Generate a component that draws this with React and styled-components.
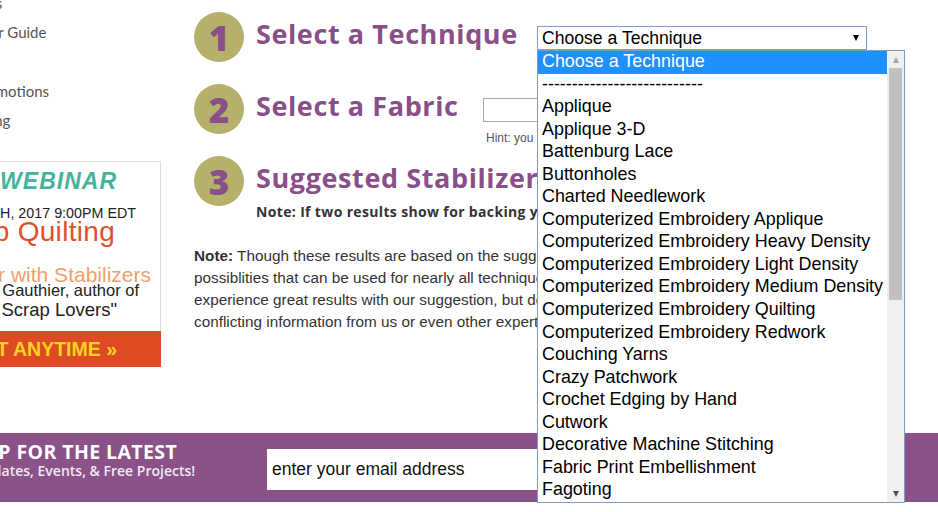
import React from "react";
import styled, { createGlobalStyle } from "styled-components";

const PURPLE = "#8a4f88";
const OLIVE = "#b5b06a";
const BAR = "#8b5189";

const GlobalStyle = createGlobalStyle`
  html, body { margin: 0; padding: 0; background: #ffffff; }
  body { overflow: hidden; font-family: "Liberation Sans", Arial, sans-serif; color: #333; }
  * { box-sizing: border-box; }
`;

const Page = styled.div`
  width: 938px;
  height: 512px;
  overflow: hidden;
  display: flex;
  flex-direction: column;
  background: #fff;
`;

const Band = styled.div`
  display: flex;
  justify-content: center;
  flex-shrink: 0;
  background: ${(p) => p.$bg || "transparent"};
  height: ${(p) => (p.$h ? `${p.$h}px` : "auto")};
`;

const Layout = styled.div`
  width: 1052px;
  flex-shrink: 0;
  display: grid;
  grid-template-columns: 218px 1fr;
  align-items: start;
`;

/* ---------- sidebar ---------- */
const Sidebar = styled.aside`
  display: flex;
  flex-direction: column;
  padding-bottom: 66px;
`;

const NavList = styled.ul`
  list-style: none;
  margin: -11px 0 0;
  padding: 0 0 0 1px;
`;

const NavItem = styled.li`
  font-family: Lato, "Open Sans", sans-serif;
  font-size: 15px;
  line-height: 29.25px;
  color: #555;
  white-space: nowrap;
`;

const Banner = styled.div`
  margin-top: 26px;
  height: 206px;
  display: flex;
  flex-direction: column;
  border-top: 1px solid #dcdcdc;
  background: #fff;
  overflow: hidden;
`;

const BannerBody = styled.div`
  flex: 1;
  border-right: 1px solid #dcdcdc;
  display: flex;
  flex-direction: column;
`;

const AdLine = styled.div`
  display: flex;
  justify-content: flex-end;
  white-space: nowrap;
  padding-right: ${(p) => p.$inset}px;
  margin-top: ${(p) => p.$top}px;
  font-family: "Liberation Sans", Arial, sans-serif;
  font-size: ${(p) => p.$size}px;
  line-height: 1;
  letter-spacing: ${(p) => p.$ls || 0}px;
  font-weight: ${(p) => (p.$bold ? 700 : 400)};
  font-style: ${(p) => (p.$italic ? "italic" : "normal")};
  color: ${(p) => p.$color};
`;

const AdCta = styled.div`
  height: 36px;
  flex-shrink: 0;
  background: #de4a24;
  color: #f8d31f;
  display: flex;
  align-items: center;
  justify-content: flex-end;
  padding-right: 44px;
  white-space: nowrap;
  font-family: "Liberation Sans", Arial, sans-serif;
  font-weight: 700;
  font-size: 19.5px;
`;

/* ---------- main ---------- */
const Main = styled.main`
  padding: 12px 0 0 33px;
  display: flex;
  flex-direction: column;
`;

const Step = styled.div`
  display: flex;
  align-items: flex-start;
  height: ${(p) => (p.$h ? `${p.$h}px` : "auto")};
  margin-bottom: ${(p) => p.$mb}px;
`;

const Badge = styled.div`
  width: 50px;
  height: 50px;
  flex-shrink: 0;
  border-radius: 50%;
  background: ${OLIVE};
  color: ${PURPLE};
  display: flex;
  align-items: center;
  justify-content: center;
  font-family: "Open Sans", sans-serif;
  font-weight: 800;
  font-size: 35px;
  line-height: 1;
`;

const StepBody = styled.div`
  display: flex;
  flex-direction: column;
  margin-left: 12px;
`;

const StepHead = styled.div`
  display: flex;
  align-items: flex-start;
`;

const Title = styled.h2`
  margin: 0;
  flex-shrink: 0;
  width: ${(p) => (p.$w ? `${p.$w}px` : "auto")};
  padding-bottom: 6px;
  font-family: "Open Sans", sans-serif;
  font-weight: 700;
  font-size: 27px;
  line-height: 44px;
  letter-spacing: 0.6px;
  color: ${PURPLE};
  white-space: nowrap;
`;

const Field = styled.div`
  position: relative;
  margin-top: 14px;
  display: flex;
  flex-direction: column;
`;

const SelectBox = styled.div`
  width: 330px;
  height: 24px;
  border: 1px solid #7b9dd3;
  background: #fff;
  display: flex;
  align-items: center;
  justify-content: space-between;
  padding: 0 7px 0 4px;
  font-size: 17.6px;
  color: #000;
  white-space: nowrap;
`;

const Caret = styled.span`
  width: 0;
  height: 0;
  border-left: 3.5px solid transparent;
  border-right: 3.5px solid transparent;
  border-top: 6px solid ${(p) => p.$color || "#000"};
  ${(p) => p.$up && "transform: rotate(180deg);"}
`;

const Dropdown = styled.div`
  position: absolute;
  top: 100%;
  left: 0;
  width: 368px;
  height: 453px;
  border: 1px solid #7f9db9;
  background: #fff;
  display: flex;
  z-index: 20;
`;

const OptionList = styled.ul`
  flex: 1;
  list-style: none;
  margin: 0;
  padding: 0;
  overflow: hidden;
`;

const Option = styled.li`
  height: 22.55px;
  line-height: 21.5px;
  padding-left: 4px;
  font-size: 17.9px;
  white-space: nowrap;
  color: ${(p) => (p.$active ? "#fff" : "#000")};
  background: ${(p) => (p.$active ? "#1e90ff" : "transparent")};
`;

const Scrollbar = styled.div`
  width: 17px;
  flex-shrink: 0;
  background: #f0f0f0;
  display: flex;
  flex-direction: column;
`;

const ScrollButton = styled.div`
  height: 17px;
  flex-shrink: 0;
  display: flex;
  align-items: center;
  justify-content: center;
`;

const Thumb = styled.div`
  height: 232px;
  margin: 0 2px;
  background: #c1c1c1;
`;

const Track = styled.div`
  flex: 1;
`;

const TextInput = styled.div`
  width: 300px;
  height: 24px;
  border: 1px solid #a9a9a9;
  background: #fff;
`;

const Hint = styled.div`
  margin-top: 9px;
  padding-left: 3px;
  font-size: 12px;
  line-height: 14px;
  color: #555;
  white-space: nowrap;
`;

const Note = styled.div`
  margin-top: -3px;
  font-family: "Open Sans", sans-serif;
  font-weight: 700;
  font-size: 14px;
  line-height: 18px;
  letter-spacing: 0.35px;
  color: #333;
  white-space: nowrap;
`;

const Paragraph = styled.p`
  margin: 24px 0 0;
  font-size: 15.3px;
  line-height: 22px;
  color: #333;
  white-space: nowrap;
`;

/* ---------- footer ---------- */
const FooterRow = styled.div`
  width: 1080px;
  flex-shrink: 0;
  display: flex;
  align-items: center;
  padding-top: 4px;
`;

const SignupText = styled.div`
  width: 338px;
  flex-shrink: 0;
  align-self: flex-start;
  margin-top: 5px;
  display: flex;
  flex-direction: column;
  color: #fff;
  font-family: "Open Sans", sans-serif;
  white-space: nowrap;
`;

const SignupTitle = styled.div`
  font-weight: 700;
  font-size: 19.5px;
  line-height: 20px;
  letter-spacing: 0.4px;
`;

const SignupSub = styled.div`
  font-weight: 600;
  font-size: 14px;
  line-height: 18px;
  color: #f2eaf1;
`;

const EmailInput = styled.div`
  width: 420px;
  height: 41px;
  background: #fff;
  display: flex;
  align-items: center;
  padding-left: 5px;
  font-size: 17.5px;
  color: #111;
`;

const OPTIONS = [
  "Choose a Technique",
  "---------------------------",
  "Applique",
  "Applique 3-D",
  "Battenburg Lace",
  "Buttonholes",
  "Charted Needlework",
  "Computerized Embroidery Applique",
  "Computerized Embroidery Heavy Density",
  "Computerized Embroidery Light Density",
  "Computerized Embroidery Medium Density",
  "Computerized Embroidery Quilting",
  "Computerized Embroidery Redwork",
  "Couching Yarns",
  "Crazy Patchwork",
  "Crochet Edging by Hand",
  "Cutwork",
  "Decorative Machine Stitching",
  "Fabric Print Embellishment",
  "Fagoting",
];

const NAV = ["Products", "Stabilizer Guide", "Blog", "Our Promotions", "Stabilizing"];

export default function App() {
  return (
    <Page>
      <GlobalStyle />
      <Band>
        <Layout>
          <Sidebar>
            <NavList>
              {NAV.map((n) => (
                <NavItem key={n}>{n}</NavItem>
              ))}
            </NavList>
            <Banner>
              <BannerBody>
                <AdLine $inset={43} $top={7.7} $size={23} $ls={1} $bold $italic $color="#45b39c">
                  FREE WEBINAR
                </AdLine>
                <AdLine $inset={24} $top={12.6} $size={14.3} $color="#222">
                  MARCH 28TH, 2017 9:00PM EDT
                </AdLine>
                <AdLine $inset={45} $top={-2.2} $size={28} $ls={0.3} $color="#e0502a">
                  Scrap Quilting
                </AdLine>
                <AdLine $inset={9} $top={18.5} $size={21} $color="#f1a06c">
                  Better with Stabilizers
                </AdLine>
                <AdLine $inset={21} $top={-2.8} $size={16.5} $color="#222">
                  with Kathy Gauthier, author of
                </AdLine>
                <AdLine $inset={43} $top={2} $size={18.5} $color="#222">
                  "Quilting for Scrap Lovers"
                </AdLine>
              </BannerBody>
              <AdCta>WATCH IT ANYTIME »</AdCta>
            </Banner>
          </Sidebar>

          <Main>
            <Step $h={50} $mb={22}>
              <Badge>1</Badge>
              <StepBody>
                <StepHead>
                  <Title $w={281}>Select a Technique</Title>
                  <Field>
                    <SelectBox>
                      <span>Choose a Technique</span>
                      <Caret />
                    </SelectBox>
                    <Dropdown>
                      <OptionList>
                        {OPTIONS.map((o, i) => (
                          <Option key={o} $active={i === 0}>
                            {o}
                          </Option>
                        ))}
                      </OptionList>
                      <Scrollbar>
                        <ScrollButton>
                          <Caret $up $color="#a3a3a3" />
                        </ScrollButton>
                        <Thumb />
                        <Track />
                        <ScrollButton>
                          <Caret $color="#505050" />
                        </ScrollButton>
                      </Scrollbar>
                    </Dropdown>
                  </Field>
                </StepHead>
              </StepBody>
            </Step>

            <Step $h={50} $mb={22}>
              <Badge>2</Badge>
              <StepBody>
                <StepHead>
                  <Title $w={227}>Select a Fabric</Title>
                  <Field>
                    <TextInput />
                    <Hint>Hint: you can type the name of your fabric</Hint>
                  </Field>
                </StepHead>
              </StepBody>
            </Step>

            <Step $mb={0}>
              <Badge>3</Badge>
              <StepBody>
                <Title>Suggested Stabilizers</Title>
                <Note>Note: If two results show for backing you can use either one.</Note>
              </StepBody>
            </Step>

            <Paragraph>
              <b>Note:</b> Though these results are based on the suggestions of our experts, there are many
              <br />
              possiblities that can be used for nearly all techniques. We are confident that you will
              <br />
              experience great results with our suggestion, but do not be alarmed if you come across
              <br />
              conflicting information from us or even other experts.
            </Paragraph>
          </Main>
        </Layout>
      </Band>

      <Band $bg={BAR} $h={69}>
        <FooterRow>
          <SignupText>
            <SignupTitle>SIGN UP FOR THE LATEST</SignupTitle>
            <SignupSub>News, Updates, Events, &amp; Free Projects!</SignupSub>
          </SignupText>
          <EmailInput>enter your email address</EmailInput>
        </FooterRow>
      </Band>
    </Page>
  );
}
